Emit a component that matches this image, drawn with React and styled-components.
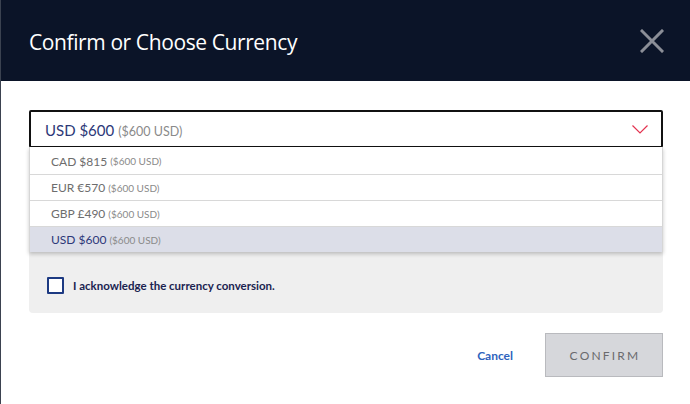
import React from "react";
import styled, { createGlobalStyle } from "styled-components";

const Global = createGlobalStyle`
  html, body { margin: 0; padding: 0; background: #3b4250; }
  body { font-family: Lato, "Liberation Sans", sans-serif; }
  * { box-sizing: border-box; }
`;

const Modal = styled.div`
  margin-left: 1px;
  width: 689px;
  height: 404px;
  background: #fff;
  display: flex;
  flex-direction: column;
`;

const Header = styled.header`
  height: 81px;
  background: #0b1428;
  display: flex;
  align-items: center;
  justify-content: space-between;
  padding: 0 26px 0 28px;
`;

const Title = styled.h1`
  margin: 0;
  color: #fff;
  font-family: "Open Sans", sans-serif;
  font-weight: 400;
  font-size: 21px;
  letter-spacing: -0.4px;
  padding-top: 2px;
`;

const CloseButton = styled.button`
  width: 24px;
  height: 24px;
  padding: 0;
  border: 0;
  background: none;
  display: flex;
  cursor: pointer;
`;

const Body = styled.div`
  padding: 29px 27px 0 28px;
`;

const Field = styled.div`
  position: relative;
`;

const SelectBox = styled.div`
  height: 38px;
  border: 2px solid #111;
  border-radius: 2px;
  background: #fff;
  display: flex;
  align-items: center;
  justify-content: space-between;
  padding: 0 13px 0 14px;
`;

const Main = styled.span`
  color: ${(p) => (p.$muted ? "#6d6d6d" : "#2c3878")};
  font-size: ${(p) => (p.$small ? "12px" : "15px")};
`;

const Sub = styled.span`
  color: #8a8a8a;
  font-size: ${(p) => (p.$small ? "10px" : "12.5px")};
  margin-left: ${(p) => (p.$small ? "3px" : "4px")};
`;

const Menu = styled.ul`
  position: absolute;
  top: 37px;
  left: 0;
  right: 0;
  margin: 0;
  padding: 0;
  list-style: none;
  background: #fff;
  border-left: 1px solid #d6d6d6;
  border-right: 1px solid #d6d6d6;
  box-shadow: 0 2px 4px rgba(0, 0, 0, 0.22);
  z-index: 2;
`;

const Option = styled.li`
  height: 26px;
  display: flex;
  align-items: center;
  padding-left: 21px;
  border-top: ${(p) => (p.$first ? "none" : "1px solid #d8d8d8")};
  background: ${(p) => (p.$selected ? "#dcdee8" : "#fff")};
  ${(p) => (p.$first ? "margin-top: 1px;" : "")}
`;

const Panel = styled.div`
  background: #efefef;
  border-radius: 0 0 4px 4px;
  padding: 129px 18px 19px 18px;
`;

const CheckRow = styled.label`
  display: flex;
  align-items: center;
  gap: 9px;
  cursor: pointer;
`;

const Box = styled.span`
  width: 17px;
  height: 17px;
  border: 2px solid #1d3a82;
  background: #fff;
  border-radius: 1px;
`;

const CheckLabel = styled.span`
  color: #1a2350;
  font-weight: 700;
  font-size: 11.5px;
`;

const Footer = styled.div`
  display: flex;
  justify-content: flex-end;
  align-items: center;
  gap: 32px;
  padding: 20px 0 0 0;
`;

const CancelLink = styled.button`
  border: 0;
  background: none;
  padding: 0;
  color: #2e63bd;
  font-family: Lato, sans-serif;
  font-weight: 700;
  font-size: 12px;
  cursor: pointer;
`;

const ConfirmButton = styled.button`
  width: 118px;
  height: 44px;
  background: #d6d7db;
  border: 1px solid #b9babe;
  color: #6a6a6d;
  font-family: Lato, sans-serif;
  font-size: 12px;
  letter-spacing: 2.2px;
  padding: 0 0 0 2px;
`;

const options = [
  { code: "CAD $815" },
  { code: "EUR €570" },
  { code: "GBP £490" },
  { code: "USD $600", selected: true },
];

export default function App() {
  return (
    <>
      <Global />
      <Modal>
        <Header>
          <Title>Confirm or Choose Currency</Title>
          <CloseButton aria-label="Close">
            <svg width="24" height="24" viewBox="0 0 24 24">
              <path d="M2 2 L22 22 M22 2 L2 22" stroke="#8b8e97" strokeWidth="3" strokeLinecap="square" />
            </svg>
          </CloseButton>
        </Header>
        <Body>
          <Field>
            <SelectBox>
              <span>
                <Main>USD $600</Main>
                <Sub>($600 USD)</Sub>
              </span>
              <svg width="16" height="9" viewBox="0 0 16 9">
                <path d="M0.5 0.5 L8 8 L15.5 0.5" fill="none" stroke="#e3324f" strokeWidth="1.2" />
              </svg>
            </SelectBox>
            <Menu>
              {options.map((o, i) => (
                <Option key={o.code} $first={i === 0} $selected={o.selected}>
                  <Main $small $muted={!o.selected}>{o.code}</Main>
                  <Sub $small>($600 USD)</Sub>
                </Option>
              ))}
            </Menu>
            <Panel>
              <CheckRow>
                <Box />
                <CheckLabel>I acknowledge the currency conversion.</CheckLabel>
              </CheckRow>
            </Panel>
          </Field>
          <Footer>
            <CancelLink>Cancel</CancelLink>
            <ConfirmButton>CONFIRM</ConfirmButton>
          </Footer>
        </Body>
      </Modal>
    </>
  );
}
